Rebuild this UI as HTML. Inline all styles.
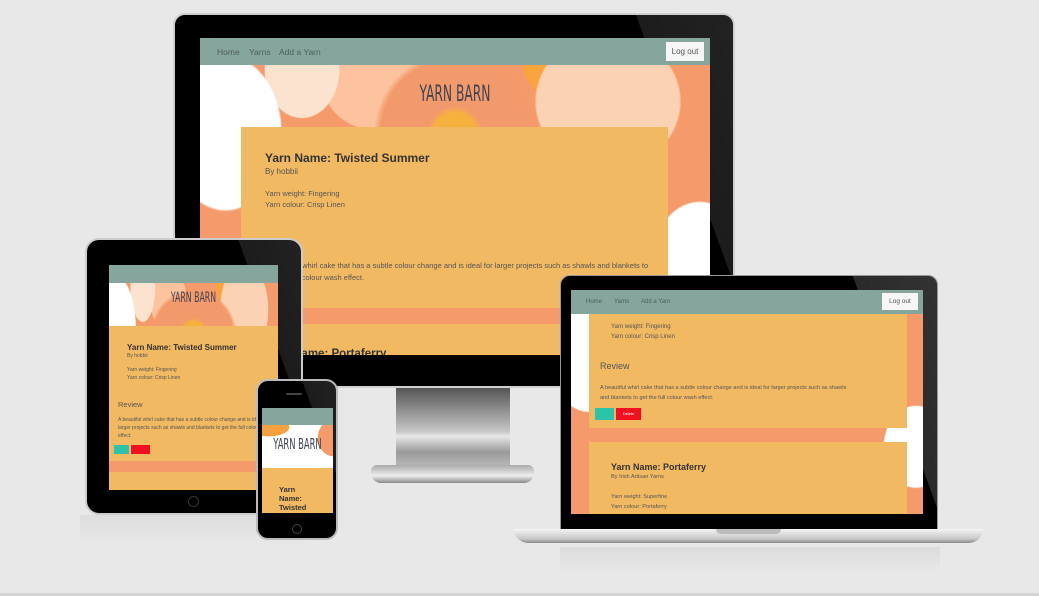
<!DOCTYPE html>
<html><head><meta charset="utf-8"><style>
*{margin:0;padding:0;box-sizing:border-box}
body{width:1039px;height:596px;background:#e8e8e8;position:relative;overflow:hidden;font-family:"Liberation Sans",sans-serif;color:#555}
.a{position:absolute}
.flor{background:
radial-gradient(ellipse 18% 40% at 5% 30%,#fff 60%,transparent 62%),
radial-gradient(ellipse 12% 25% at 20% 10%,#fbe3d0 60%,transparent 62%),
radial-gradient(circle at 50% 30%,#f7b13e 6%,#f39a6c 8%,#f39a6c 22%,transparent 24%),
radial-gradient(ellipse 20% 30% at 80% 20%,#fcd2b4 70%,transparent 72%),
radial-gradient(ellipse 15% 30% at 98% 70%,#fff 60%,transparent 62%),
radial-gradient(ellipse 15% 20% at 35% 15%,#fcc39e 70%,transparent 72%),
radial-gradient(ellipse 10% 20% at 70% 5%,#f9a43c 70%,transparent 72%),
#f59a6a}
.nav{background:#86a59c;position:absolute;left:0;right:0;top:0}
.card{background:#f2b963;position:absolute}
.logo{font-family:"DejaVu Sans Condensed","Liberation Sans Narrow",sans-serif;color:#3e4352;position:absolute;left:-60px;right:-60px;text-align:center;transform:scaleX(0.62);font-weight:normal;white-space:nowrap}
h3{color:#333;font-weight:bold}
.bez{background:#050505;position:absolute}
</style></head><body>
<div class="a" style="left:0;top:593px;width:1039px;height:3px;background:#d4d4d4"></div>

<div class="a" style="left:396px;top:388px;width:114px;height:80px;background:linear-gradient(#555 0%,#8a8a8a 25%,#c8c8c8 55%,#e8e8e8 60%,#9a9a9a 80%,#bbb 100%)"></div>
<div class="a" style="left:371px;top:465px;width:163px;height:18px;border-radius:6px 6px 10px 10px;background:linear-gradient(#aaa,#eee 60%,#888)"></div>
<div class="bez" style="left:173px;top:13px;width:562px;height:375px;border-radius:12px;border:2px solid #cfcfcf;background:linear-gradient(250deg,#222 0,#1c1c1c 14%,#000 14%)"></div>
<div class="a flor" style="left:200px;top:38px;width:510px;height:317px;overflow:hidden">
 <div class="nav" style="height:27px;font-size:8.5px;color:#4c5f58">
  <span class="a" style="left:17px;top:9px">Home</span><span class="a" style="left:49px;top:9px">Yarns</span><span class="a" style="left:79px;top:9px">Add a Yarn</span>
  <div class="a" style="right:6px;top:4px;width:38px;height:19px;background:#f6f6f6;color:#555;font-size:8px;text-align:center;line-height:19px">Log out</div>
 </div>
 <div class="logo" style="top:44px;font-size:22px">YARN BARN</div>
 <div class="card" style="left:41px;top:89px;width:427px;height:181px">
  <h3 class="a" style="left:24px;top:24px;font-size:12px">Yarn Name: Twisted Summer</h3>
  <div class="a" style="left:24px;top:40px;font-size:8px">By hobbii</div>
  <div class="a" style="left:24px;top:61px;font-size:7.5px;line-height:11px">Yarn weight: Fingering<br>Yarn colour: Crisp Linen</div>
  <div class="a" style="left:24px;top:133px;font-size:7.5px;line-height:12px">A beautiful whirl cake that has a subtle colour change and is ideal for larger projects such as shawls and blankets to<br>get the full colour wash effect.</div>
 </div>
 <div class="card" style="left:41px;top:286px;width:427px;height:40px"><h3 class="a" style="left:24px;top:24px;font-size:11.5px">Yarn Name: Portaferry</h3></div>
</div>

<div class="bez" style="left:85px;top:238px;width:218px;height:277px;border-radius:14px;border:2px solid #ccc;background:linear-gradient(250deg,#222 0,#1c1c1c 20%,#000 20%)"></div>
<div class="a" style="left:188px;top:496px;width:11px;height:11px;border:1px solid #333;border-radius:50%"></div>
<div class="a" style="left:80px;top:515px;width:230px;height:30px;background:linear-gradient(#ddd,#e8e8e8)"></div>
<div class="a flor" style="left:109px;top:265px;width:169px;height:225px;overflow:hidden">
 <div class="nav" style="height:18px"></div>
 <div class="logo" style="top:25px;font-size:14px">YARN BARN</div>
 <div class="card" style="left:0;top:61px;width:169px;height:135px">
  <h3 class="a" style="left:18px;top:17px;font-size:8px">Yarn Name: Twisted Summer</h3>
  <div class="a" style="left:18px;top:27px;font-size:5px">By hobbii</div>
  <div class="a" style="left:18px;top:40px;font-size:5px;line-height:8px">Yarn weight: Fingering<br>Yarn colour: Crisp Linen</div>
  <div class="a" style="left:9px;top:74px;font-size:7.5px">Review</div>
  <div class="a" style="left:9px;top:90px;font-size:5px;line-height:8px;width:165px">A beautiful whirl cake that has a subtle colour change and is ideal for larger projects such as shawls and blankets to get the full colour wash effect.</div>
  <div class="a" style="left:5px;top:119px;width:15px;height:9px;background:#2bc4a8"></div>
  <div class="a" style="left:22px;top:119px;width:19px;height:9px;background:#f01020"></div>
 </div>
 <div class="card" style="left:0;top:207px;width:169px;height:20px"></div>
</div>

<div class="bez" style="left:256px;top:379px;width:82px;height:161px;border-radius:12px;border:2px solid #bbb;background:linear-gradient(250deg,#222 0,#1c1c1c 25%,#000 25%)"></div>
<div class="a" style="left:292px;top:524px;width:10px;height:10px;border:1px solid #444;border-radius:50%"></div>
<div class="a" style="left:286px;top:393px;width:16px;height:2px;background:#444;border-radius:1px"></div>
<div class="a flor" style="left:262px;top:408px;width:71px;height:105px;overflow:hidden;background:#fff">
 <div class="nav" style="height:17px"></div>
 <div class="a" style="left:0;top:17px;width:71px;height:43px;background:radial-gradient(ellipse 40% 30% at 10% 5%,#f7a040 70%,transparent 72%),radial-gradient(ellipse 30% 60% at 100% 30%,#f59a6a 70%,transparent 72%),#fff"></div>
 <div class="logo" style="top:27px;font-size:15px">YARN BARN</div>
 <div class="card" style="left:0;top:60px;width:71px;height:45px"><h3 class="a" style="left:17px;top:17px;font-size:7.5px;line-height:9px">Yarn<br>Name:<br>Twisted</h3></div>
</div>

<div class="bez" style="left:560px;top:275px;width:378px;height:255px;border-radius:10px 10px 0 0;border:1px solid #999;background:linear-gradient(250deg,#333 0,#2a2a2a 18%,#000 18%)"></div>
<div class="a" style="left:514px;top:529px;width:469px;height:14px;border-radius:0 0 20px 20px;background:linear-gradient(#f4f4f4,#c8c8c8 70%,#888)"></div>
<div class="a" style="left:716px;top:529px;width:65px;height:5px;border-radius:0 0 5px 5px;background:#bbb"></div>
<div class="a" style="left:560px;top:547px;width:380px;height:25px;background:linear-gradient(#dcdcdc,#e8e8e8)"></div>
<div class="a flor" style="left:571px;top:290px;width:352px;height:224px;overflow:hidden">
 <div class="nav" style="height:24px;font-size:6px;color:#4c5f58">
  <span class="a" style="left:15px;top:9px">Home</span><span class="a" style="left:43px;top:9px">Yarns</span><span class="a" style="left:70px;top:9px">Add a Yarn</span>
  <div class="a" style="right:5px;top:3px;width:36px;height:17px;background:#f6f6f6;color:#555;font-size:6.5px;text-align:center;line-height:17px">Log out</div>
 </div>
 <div class="card" style="left:18px;top:24px;width:318px;height:114px">
  <div class="a" style="left:22px;top:8px;font-size:6px;line-height:10px">Yarn weight: Fingering<br>Yarn colour: Crisp Linen</div>
  <div class="a" style="left:11px;top:47px;font-size:9px">Review</div>
  <div class="a" style="left:11px;top:69px;font-size:5.6px;line-height:10px">A beautiful whirl cake that has a subtle colour change and is ideal for larger projects such as shawls<br>and blankets to get the full colour wash effect.</div>
  <div class="a" style="left:6px;top:94px;width:19px;height:12px;background:#2bc4a8"></div>
  <div class="a" style="left:27px;top:94px;width:25px;height:12px;background:#f01020;color:#fff;font-size:4px;text-align:center;line-height:12px">Delete</div>
 </div>
 <div class="card" style="left:18px;top:152px;width:318px;height:72px">
  <h3 class="a" style="left:22px;top:20px;font-size:9px">Yarn Name: Portaferry</h3>
  <div class="a" style="left:22px;top:32px;font-size:5.6px">By Irish Artisan Yarns</div>
  <div class="a" style="left:22px;top:50px;font-size:5.6px;line-height:10px">Yarn weight: Superfine<br>Yarn colour: Portaferry</div>
 </div>
</div>
</body></html>
